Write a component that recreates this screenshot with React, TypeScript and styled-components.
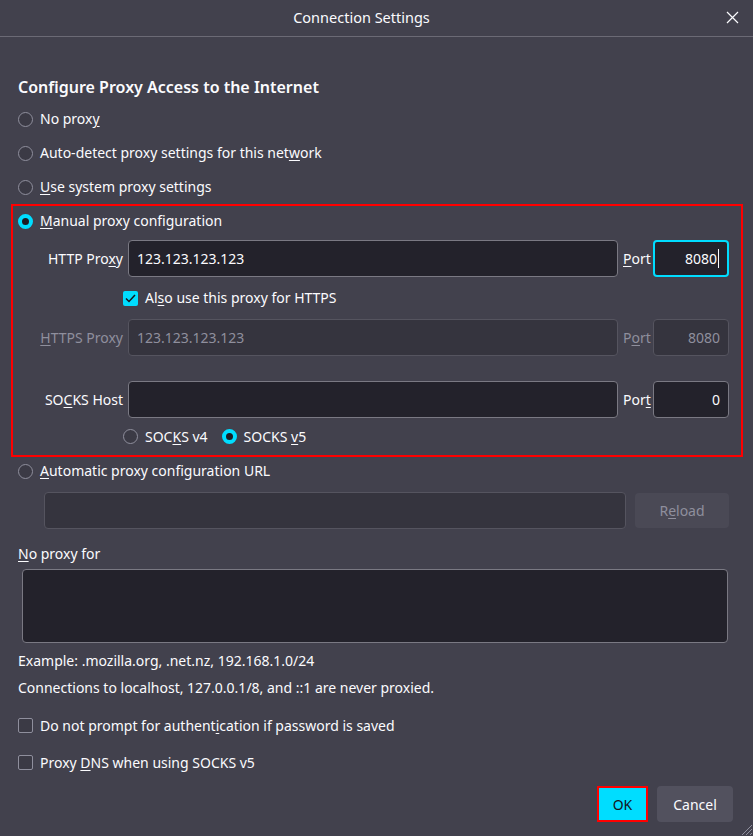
import React from "react";
import styled, { createGlobalStyle } from "styled-components";

const Global = createGlobalStyle`
  html, body { margin: 0; padding: 0; background: #42414d; }
  body { font-family: "Noto Sans", "Open Sans", sans-serif; color: #fbfbfe; }
  * { box-sizing: border-box; }
`;

const Dialog = styled.div`
  width: 753px;
  height: 836px;
  background: #42414d;
  position: relative;
  font-size: 14px;
`;

const Header = styled.div`
  height: 37px;
  border-bottom: 1px solid #6b6a75;
  display: flex;
  align-items: center;
  justify-content: center;
  padding-right: 30px;
  padding-bottom: 2px;
  position: relative;
`;

const Title = styled.div`
  font-size: 14.5px;
  color: #fbfbfe;
`;

const CloseButton = styled.button`
  position: absolute;
  right: 14px;
  top: 10px;
  width: 14px;
  height: 14px;
  padding: 0;
  border: none;
  background: transparent;
  display: flex;
  align-items: center;
  justify-content: center;
`;

const Body = styled.div`
  padding: 0 18px;
  display: flex;
  flex-direction: column;
`;

const Heading = styled.div`
  margin-top: 40px;
  height: 20px;
  line-height: 20px;
  font-size: 16px;
  font-weight: 600;
  margin-bottom: 5px;
`;

const Row = styled.div<{ $h: number; $indent?: number }>`
  display: flex;
  align-items: center;
  height: ${(p) => p.$h}px;
  margin-left: ${(p) => p.$indent ?? 0}px;
  gap: 7px;
`;

const Label = styled.span<{ $disabled?: boolean }>`
  white-space: nowrap;
  color: ${(p) => (p.$disabled ? "#8f8f9d" : "#fbfbfe")};
  line-height: 18px;
`;

const Key = styled.span`
  text-decoration: underline;
  text-underline-offset: 2px;
`;

const Radio = styled.span<{ $checked?: boolean }>`
  width: 15px;
  height: 15px;
  border-radius: 50%;
  flex: none;
  border: ${(p) => (p.$checked ? "4px solid #00ddff" : "1px solid #8f8f9d")};
  background: ${(p) => (p.$checked ? "#1c1b22" : "#3b3a45")};
`;

const Check = styled.span<{ $checked?: boolean }>`
  width: 15px;
  height: 15px;
  border-radius: 2px;
  flex: none;
  display: flex;
  align-items: center;
  justify-content: center;
  border: ${(p) => (p.$checked ? "none" : "1px solid #8f8f9d")};
  background: ${(p) => (p.$checked ? "#00ddff" : "#3b3a45")};
`;

const Highlight = styled.div`
  margin-left: -7px;
  width: 732px;
  border: 2px solid #ff0000;
  padding: 0 0 0 5px;
  display: flex;
  flex-direction: column;
`;

const ProxyGrid = styled.div`
  display: grid;
  grid-template-columns: 110px 490px 35px 76px;
  align-items: center;
  margin-top: 4px;
`;

const FieldLabel = styled.span<{ $disabled?: boolean; $align?: string }>`
  text-align: ${(p) => p.$align ?? "right"};
  padding-right: ${(p) => (p.$align === "left" ? 0 : 5)}px;
  padding-left: ${(p) => (p.$align === "left" ? 5 : 0)}px;
  color: ${(p) => (p.$disabled ? "#8f8f9d" : "#fbfbfe")};
  white-space: nowrap;
`;

const Input = styled.div<{ $disabled?: boolean; $focused?: boolean; $right?: boolean }>`
  height: 37px;
  border-radius: 4px;
  display: flex;
  align-items: center;
  justify-content: ${(p) => (p.$right ? "flex-end" : "flex-start")};
  padding: 0 8px;
  background: ${(p) => (p.$disabled ? "#35343e" : "#23222b")};
  border: ${(p) =>
    p.$focused ? "2px solid #00ddff" : p.$disabled ? "1px solid #55545f" : "1px solid #7a7983"};
  color: ${(p) => (p.$disabled ? "#8f8f9d" : "#fbfbfe")};
  white-space: nowrap;
`;

const Caret = styled.span`
  display: inline-block;
  width: 1px;
  height: 19px;
  background: #fbfbfe;
  margin-left: 1px;
`;

const CheckCell = styled.div`
  grid-column: 2 / 5;
  margin-left: -5px;
  height: 42px;
  display: flex;
  align-items: center;
  gap: 7px;
`;

const Spacer = styled.div<{ $h: number }>`
  grid-column: 1 / 5;
  height: ${(p) => p.$h}px;
`;

const SocksRow = styled.div`
  margin-left: 105px;
  height: 37px;
  display: flex;
  align-items: center;
`;

const SocksOption = styled.div`
  display: flex;
  align-items: center;
  gap: 7px;
  margin-right: 14px;
`;

const UrlRow = styled.div`
  margin-left: 26px;
  margin-top: 7px;
  display: flex;
  gap: 9px;
  width: 685px;
`;

const Button = styled.button<{ $variant?: "primary" | "disabled" | "normal"; $w: number }>`
  height: 36px;
  width: ${(p) => p.$w}px;
  font-family: inherit;
  font-size: 14px;
  display: flex;
  align-items: center;
  justify-content: center;
  padding: 0;
  border: ${(p) => (p.$variant === "primary" ? "2px solid #ff0000" : "none")};
  border-radius: ${(p) => (p.$variant === "primary" ? "0" : "4px")};
  background: ${(p) =>
    p.$variant === "primary" ? "#00ddff" : p.$variant === "disabled" ? "#4a4955" : "#52515e"};
  color: ${(p) =>
    p.$variant === "primary" ? "#15141a" : p.$variant === "disabled" ? "#8f8f9d" : "#fbfbfe"};
`;

const SectionLabel = styled.div`
  margin-top: 16px;
  line-height: 18px;
`;

const TextArea = styled.div`
  margin-top: 6px;
  margin-left: 4px;
  width: 706px;
  height: 74px;
  border-radius: 4px;
  background: #23222b;
  border: 1px solid #7a7983;
`;

const Note = styled.div`
  margin-top: 9px;
  line-height: 18px;
`;

const Footer = styled.div`
  display: flex;
  justify-content: flex-end;
  gap: 9px;
  padding-right: 20px;
  margin-top: 5px;
`;

const Grip = styled.svg`
  position: absolute;
  right: 0;
  bottom: 0;
`;

const CheckMark = () => (
  <svg width="11" height="9" viewBox="0 0 11 9">
    <path d="M1 4.5 L4 7.5 L10 1" fill="none" stroke="#15141a" strokeWidth="1.5" />
  </svg>
);

export default function App() {
  return (
    <Dialog>
      <Global />
      <Header>
        <Title>Connection Settings</Title>
        <CloseButton aria-label="Close">
          <svg width="13" height="13" viewBox="0 0 13 13">
            <path d="M1 1 L12 12 M12 1 L1 12" stroke="#fbfbfe" strokeWidth="1.2" />
          </svg>
        </CloseButton>
      </Header>
      <Body>
        <Heading>Configure Proxy Access to the Internet</Heading>
        <Row $h={34}>
          <Radio />
          <Label>
            No prox<Key>y</Key>
          </Label>
        </Row>
        <Row $h={34}>
          <Radio />
          <Label>
            Auto-detect proxy settings for this net<Key>w</Key>ork
          </Label>
        </Row>
        <Row $h={34}>
          <Radio />
          <Label>
            <Key>U</Key>se system proxy settings
          </Label>
        </Row>
        <Highlight>
          <Row $h={30}>
            <Radio $checked />
            <Label>
              <Key>M</Key>anual proxy configuration
            </Label>
          </Row>
          <ProxyGrid>
            <FieldLabel>
              HTTP Pro<Key>x</Key>y
            </FieldLabel>
            <Input>123.123.123.123</Input>
            <FieldLabel $align="left">
              <Key>P</Key>ort
            </FieldLabel>
            <Input $focused $right>
              8080
              <Caret />
            </Input>
            <CheckCell>
              <Check $checked>
                <CheckMark />
              </Check>
              <Label>
                Al<Key>s</Key>o use this proxy for HTTPS
              </Label>
            </CheckCell>
            <FieldLabel $disabled>
              <Key>H</Key>TTPS Proxy
            </FieldLabel>
            <Input $disabled>123.123.123.123</Input>
            <FieldLabel $align="left" $disabled>
              P<Key>o</Key>rt
            </FieldLabel>
            <Input $disabled $right>
              8080
            </Input>
            <Spacer $h={25} />
            <FieldLabel>
              SO<Key>C</Key>KS Host
            </FieldLabel>
            <Input />
            <FieldLabel $align="left">
              Por<Key>t</Key>
            </FieldLabel>
            <Input $right>0</Input>
          </ProxyGrid>
          <SocksRow>
            <SocksOption>
              <Radio />
              <Label>
                SOC<Key>K</Key>S v4
              </Label>
            </SocksOption>
            <SocksOption>
              <Radio $checked />
              <Label>
                SOCKS <Key>v</Key>5
              </Label>
            </SocksOption>
          </SocksRow>
        </Highlight>
        <Row $h={28}>
          <Radio />
          <Label>
            <Key>A</Key>utomatic proxy configuration URL
          </Label>
        </Row>
        <UrlRow>
          <Input $disabled style={{ flex: 1 }} />
          <Button $variant="disabled" $w={94} style={{ height: 35, marginTop: 1 }}>
            R<Key>e</Key>load
          </Button>
        </UrlRow>
        <SectionLabel>
          <Key>N</Key>o proxy for
        </SectionLabel>
        <TextArea />
        <Note>Example: .mozilla.org, .net.nz, 192.168.1.0/24</Note>
        <Note>Connections to localhost, 127.0.0.1/8, and ::1 are never proxied.</Note>
        <Row $h={37} style={{ marginTop: 10 }}>
          <Check />
          <Label>
            Do not prompt for authent<Key>i</Key>cation if password is saved
          </Label>
        </Row>
        <Row $h={37}>
          <Check />
          <Label>
            Proxy <Key>D</Key>NS when using SOCKS v5
          </Label>
        </Row>
      </Body>
      <Footer>
        <Button $variant="primary" $w={51}>
          OK
        </Button>
        <Button $variant="normal" $w={76}>
          Cancel
        </Button>
      </Footer>
      <Grip width="14" height="14" viewBox="0 0 14 14">
        <path d="M13 3 L3 13 M13 7 L7 13 M13 11 L11 13" stroke="#8f8f9d" strokeWidth="1" />
      </Grip>
    </Dialog>
  );
}
